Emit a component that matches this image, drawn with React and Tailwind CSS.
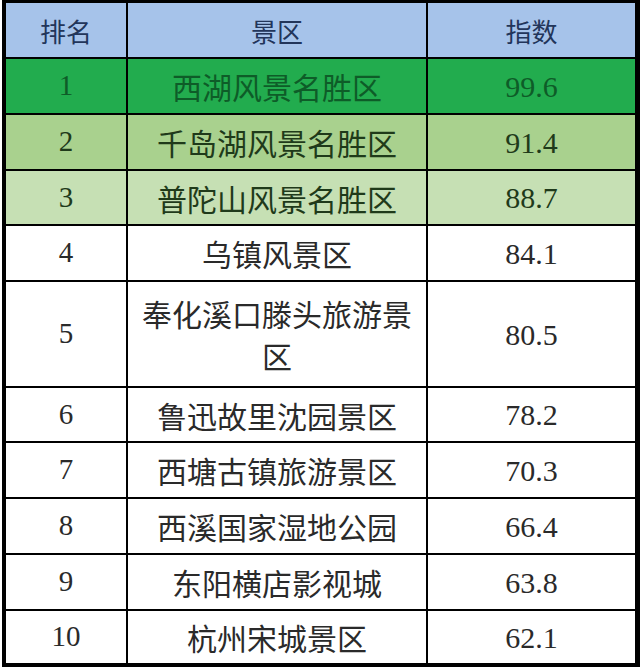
const rows = [
  { rank: "1", name: "西湖风景名胜区", score: "99.6", bg: "bg-[#22ac4e]", fg: "text-[#0e5c28]" },
  { rank: "2", name: "千岛湖风景名胜区", score: "91.4", bg: "bg-[#a9d18e]", fg: "text-[#1f3a1a]" },
  { rank: "3", name: "普陀山风景名胜区", score: "88.7", bg: "bg-[#c6e0b4]", fg: "text-[#1f3a1a]" },
  { rank: "4", name: "乌镇风景区", score: "84.1" },
  { rank: "5", name: "奉化溪口滕头旅游景区", score: "80.5" },
  { rank: "6", name: "鲁迅故里沈园景区", score: "78.2" },
  { rank: "7", name: "西塘古镇旅游景区", score: "70.3" },
  { rank: "8", name: "西溪国家湿地公园", score: "66.4" },
  { rank: "9", name: "东阳横店影视城", score: "63.8" },
  { rank: "10", name: "杭州宋城景区", score: "62.1" },
];

export default function App() {
  return (
    <div className="w-[640px] h-[667px] bg-white pl-[2px]">
      <div className="grid grid-cols-[120px_298px_207px] grid-rows-[54px_54px_54px_53px_54px_104px_53px_54px_54px_54px_52px] gap-[2px] bg-black border-l-4 border-t-[3px] border-r-[5px] border-b-4 border-black">
        {["排名", "景区", "指数"].map((h) => (
          <div
            key={h}
            className="flex items-center justify-center bg-[#a6c3ea] text-[26px] text-[#22355a] font-['Noto_Sans_CJK_SC']"
          >
            {h}
          </div>
        ))}
        {rows.map((r) => {
          const tone = (r.bg || "bg-white") + " " + (r.fg || "text-[#2a2a2a]");
          return [
            <div key={r.rank + "a"} className={"flex items-center justify-center text-[29px] font-['Liberation_Serif'] " + tone}>
              {r.rank}
            </div>,
            <div key={r.rank + "b"} className={"flex items-center justify-center px-[10px] text-center text-[30px] leading-[42px] font-['Noto_Sans_CJK_SC'] " + tone}>
              {r.name}
            </div>,
            <div key={r.rank + "c"} className={"flex items-center justify-center text-[30px] font-['Liberation_Serif'] " + tone}>
              {r.score}
            </div>,
          ];
        })}
      </div>
    </div>
  );
}
